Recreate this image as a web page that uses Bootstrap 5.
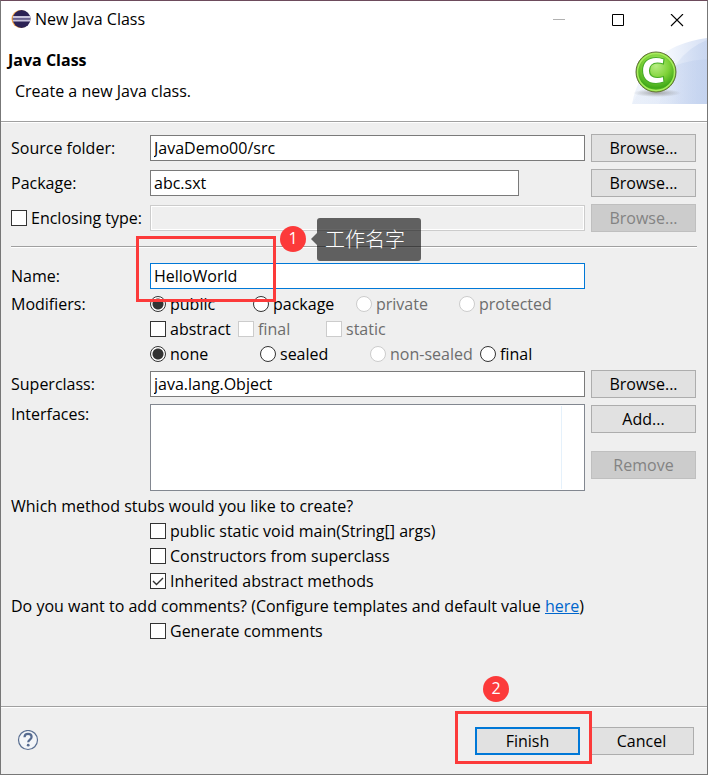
<!DOCTYPE html>
<html lang="en">
<head>
<meta charset="utf-8">
<meta name="viewport" content="width=device-width, initial-scale=1">
<title>New Java Class</title>
<link href="https://cdn.jsdelivr.net/npm/bootstrap@5.3.0/dist/css/bootstrap.min.css" rel="stylesheet">
<style>
  body { font: 16px/20px "Open Sans", "Noto Sans CJK SC", sans-serif; color: #000; background: #efefef; }
  .dialog { border: 1px solid #777; border-top-color: #6d4b5c; }
  .heading { background: #fff; }
  .titlebar { height: 36px; padding: 0 1px 0 10px; }
  .caption-btn { width: 59px; height: 36px; }
  .banner { height: 84px; }
  .banner-text { padding: 13px 0 0 7px; }
  .banner-text h1 { font-size: 16px; line-height: 20px; }
  .banner-text p { padding-left: 7px; margin-top: 11px; }
  .rule { height: 2px; background: #fff; border-top: 1px solid #a0a0a0; }
  .form-area { padding: 11px 11px 0 10px; }
  .form-line { display: grid; grid-template-columns: 139px 1fr 105px; align-items: center; margin-bottom: 7px; }
  .field { height: 26px; margin-right: 6px; padding: 0 3px; border: 1px solid #7a7a7a; border-radius: 0; background: #fff; color: #000; min-width: 0; outline: 0; }
  .field:disabled { border-color: #ccc; background: #efefef; box-shadow: inset -1px -1px #fff, inset 1px 1px #fff; }
  .field-short { margin-right: 72px; }
  .field-active { border-color: #0078d7; }
  .push { --bs-btn-font-size: 16px; --bs-btn-line-height: 20px; --bs-btn-padding-y: 3px; --bs-btn-padding-x: 4px;
    --bs-btn-border-radius: 0; --bs-btn-color: #000; --bs-btn-bg: #e1e1e1; --bs-btn-border-color: #adadad;
    --bs-btn-hover-bg: #e5f1fb; --bs-btn-hover-color: #000; --bs-btn-hover-border-color: #0078d7;
    --bs-btn-disabled-bg: #ccc; --bs-btn-disabled-color: #838383; --bs-btn-disabled-border-color: #bfbfbf; --bs-btn-disabled-opacity: 1;
    width: 105px; height: 28px; }
  .push-default { --bs-btn-border-color: #0078d7; --bs-btn-border-width: 2px; --bs-btn-padding-y: 2px; }
  .option { display: flex; align-items: center; gap: 4px; height: 25px; padding-bottom: 1px; white-space: nowrap; }
  .option input { appearance: none; flex: none; width: 16px; height: 16px; margin: 0; border: 1px solid #333; background: #fff; }
  .option input[type=radio] { border-radius: 50%; }
  .option input[type=radio]:checked { background: radial-gradient(circle, #333 5px, #fff 6px); }
  .option input[type=checkbox]:checked { background: #fff url("data:image/svg+xml,%3Csvg xmlns='http://www.w3.org/2000/svg' viewBox='0 0 14 14'%3E%3Cpath d='M2 7l3.5 3.5L12 4' fill='none' stroke='%23333' stroke-width='1.4'/%3E%3C/svg%3E"); }
  .option input:disabled { border-color: #ccc; }
  .option:has(input:disabled) { color: #6d6d6d; }
  .section-rule { margin: 14px -1px 15px 0; }
  .name-line { margin-bottom: 3px; }
  .modifier-line { display: grid; grid-template-columns: 139px 1fr; }
  .opts-access { display: grid; grid-template-columns: repeat(4, 103px); }
  .opts-flags { display: grid; grid-template-columns: repeat(3, 88px); }
  .opts-sealing { display: grid; grid-template-columns: repeat(4, 110px); }
  .super-line { margin: 3px 0 6px; }
  .interfaces-line { align-items: start; margin-bottom: 3px; }
  .type-list { height: 87px; margin-right: 6px; padding: 1px 22px 1px 0; border: 1px solid #828790; background: #fff; }
  .type-column { border-right: 1px solid #e5f1fb; }
  .list-buttons { padding-top: 1px; gap: 18px; }
  .stubs { padding-left: 139px; }
  .sentence { line-height: 24px; padding-bottom: 1px; }
  .sentence a { color: #0066cc; }
  .footer-bar { padding: 19px 13px 19px 16px; }
  .help-btn { width: 22px; height: 22px; }
  .cancel-btn { margin-left: 9px; }
  /* Annotations that lie over the dialog */
  .outline-box { position: absolute; border: 3px solid #fc3a3a; pointer-events: none; }
  .step { position: absolute; width: 26px; height: 26px; border-radius: 50%; background: #fc3a3a; color: #fff; text-align: center; line-height: 24px; }
  .outline-name { left: -14px; top: -27px; width: 140px; height: 66px; }
  .step-name { left: 130px; top: -37px; }
  .note { position: absolute; left: 167px; top: -45px; height: 43px; padding: 0 16px 0 8px; border-radius: 3px; background: rgba(0,0,0,.6); color: #fff; font-size: 20px; font-weight: 300; line-height: 44px; white-space: nowrap; }
  .note::before { content: ""; position: absolute; right: 100%; top: 15px; border: 6px solid transparent; border-left: 0; border-right-color: rgba(0,0,0,.6); }
  .outline-finish { left: -20px; top: -16px; width: 137px; height: 53px; }
  .step-finish { left: 8px; top: -51px; }
</style>
</head>
<body>
<main class="dialog min-vh-100 d-flex flex-column">
  <header class="heading">
    <div class="titlebar d-flex align-items-center">
      <svg width="20" height="20" viewBox="0 0 20 20" aria-hidden="true">
        <circle cx="9.5" cy="10" r="9" fill="#f5a54a"/><circle cx="10.6" cy="10" r="8.9" fill="#2c2255"/>
        <path d="M2 8h17.200M2 11.500h17.200" stroke="#c9c4dc" stroke-width="1.800"/><path d="M2 9.700h17.400" stroke="#746b9b" stroke-width="1.200"/>
      </svg>
      <span class="ms-1">New Java Class</span>
      <div class="ms-auto d-flex">
        <button class="caption-btn btn p-0 border-0" type="button" aria-label="Minimize" disabled><svg width="14" height="14" viewBox="0 0 14 14"><path d="M1 5.500h12" stroke="#888"/></svg></button>
        <button class="caption-btn btn p-0 border-0" type="button" aria-label="Maximize"><svg width="14" height="14" viewBox="0 0 14 14"><path d="M1.500 .5h11v11h-11z" fill="none" stroke="#000"/></svg></button>
        <button class="caption-btn btn p-0 border-0" type="button" aria-label="Close"><svg width="14" height="14" viewBox="0 0 14 14"><path d="M1 0l12 12M13 0L1 12" stroke="#000" stroke-width="1.100"/></svg></button>
      </div>
    </div>
    <div class="banner d-flex justify-content-between">
      <div class="banner-text">
        <h1 class="fw-bold mb-0">Java Class</h1>
        <p class="mb-0">Create a new Java class.</p>
      </div>
      <svg width="76" height="68" viewBox="0 0 76 68" aria-hidden="true">
        <defs>
          <linearGradient id="sky"><stop offset="0" stop-color="#eef3fb"/><stop offset=".5" stop-color="#f2f6fd"/><stop offset="1" stop-color="#d6e0f4"/></linearGradient>
          <linearGradient id="wave"><stop offset="0" stop-color="#c9d7f0" stop-opacity=".1"/><stop offset="1" stop-color="#c0d0ee" stop-opacity=".6"/></linearGradient>
          <radialGradient id="orb" cx=".5" cy=".35" r=".65"><stop offset="0" stop-color="#b8ed83"/><stop offset=".5" stop-color="#7ed238"/><stop offset=".85" stop-color="#3fa818"/><stop offset="1" stop-color="#83d932"/></radialGradient>
          <radialGradient id="shade"><stop offset="0" stop-color="#888" stop-opacity=".7"/><stop offset="1" stop-color="#888" stop-opacity="0"/></radialGradient>
        </defs>
        <path d="M1 67Q12 10 76 1V67Z" fill="url(#sky)"/>
        <path d="M28 67Q40 17 76 3V67Z" fill="url(#wave)"/>
        <path d="M1 67Q20 26 76 22V67Z" fill="url(#wave)"/>
        <ellipse cx="26" cy="56" rx="24" ry="4" fill="url(#shade)"/>
        <circle cx="25" cy="35" r="20" fill="url(#orb)" stroke="#666f3a"/>
        <circle cx="25" cy="35" r="18.500" fill="none" stroke="#a9ec60" stroke-width="1.500"/>
        <path d="M33 22q-4-1.500-8-1.500C16 20.500 11.500 26 11.500 33.500S16 46.500 25 46.500q4 0 8-1.500l-.6-5.500q-3 1-6 1c-5 0-7.900-2.500-7.900-7s3-7.500 7.900-7.500q3 0 6 1z" fill="#fff" stroke="#48ad27" stroke-width="1.200"/>
      </svg>
    </div>
    <div class="rule"></div>
  </header>

  <form class="form-area" id="class-form" onsubmit="return false">
    <div class="form-line">
      <label for="folder">Source folder:</label>
      <input class="field" id="folder" type="text" value="JavaDemo00/src">
      <button class="btn push" type="button">Browse...</button>
    </div>
    <div class="form-line">
      <label for="package">Package:</label>
      <input class="field field-short" id="package" type="text" value="abc.sxt">
      <button class="btn push" type="button">Browse...</button>
    </div>
    <div class="form-line mb-0">
      <label class="option"><input type="checkbox">Enclosing type:</label>
      <input class="field" type="text" aria-label="Enclosing type" disabled>
      <button class="btn push" type="button" disabled>Browse...</button>
    </div>
    <div class="rule section-rule"></div>

    <div class="form-line name-line">
      <label for="class-name">Name:</label>
      <div class="position-relative d-flex">
        <input class="field field-active flex-grow-1" id="class-name" type="text" value="HelloWorld">
        <div class="outline-box outline-name z-1"></div>
        <span class="step step-name">1</span>
        <span class="note" lang="zh">工作名字</span>
      </div>
    </div>
    <div class="modifier-line">
      <span class="sentence">Modifiers:</span>
      <div>
        <div class="opts-access" role="radiogroup" aria-label="Access">
          <label class="option"><input type="radio" name="access" checked>public</label>
          <label class="option"><input type="radio" name="access">package</label>
          <label class="option"><input type="radio" name="access" disabled>private</label>
          <label class="option"><input type="radio" name="access" disabled>protected</label>
        </div>
        <div class="opts-flags">
          <label class="option"><input type="checkbox">abstract</label>
          <label class="option"><input type="checkbox" disabled>final</label>
          <label class="option"><input type="checkbox" disabled>static</label>
        </div>
        <div class="opts-sealing" role="radiogroup" aria-label="Sealing">
          <label class="option"><input type="radio" name="sealing" checked>none</label>
          <label class="option"><input type="radio" name="sealing">sealed</label>
          <label class="option"><input type="radio" name="sealing" disabled>non-sealed</label>
          <label class="option"><input type="radio" name="sealing">final</label>
        </div>
      </div>
    </div>
    <div class="form-line super-line">
      <label for="superclass">Superclass:</label>
      <input class="field" id="superclass" type="text" value="java.lang.Object">
      <button class="btn push" type="button">Browse...</button>
    </div>
    <div class="form-line interfaces-line">
      <span id="interfaces-label">Interfaces:</span>
      <div class="type-list d-flex" role="listbox" aria-labelledby="interfaces-label" tabindex="0"><div class="type-column flex-grow-1"></div></div>
      <div class="list-buttons d-flex flex-column">
        <button class="btn push" type="button">Add...</button>
        <button class="btn push" type="button" disabled>Remove</button>
      </div>
    </div>

    <div class="sentence">Which method stubs would you like to create?</div>
    <div class="stubs">
      <label class="option"><input type="checkbox">public static void main(String[] args)</label>
      <label class="option"><input type="checkbox">Constructors from superclass</label>
      <label class="option"><input type="checkbox" checked>Inherited abstract methods</label>
    </div>
    <div class="sentence">Do you want to add comments? (Configure templates and default value <a href="#">here</a>)</div>
    <div class="stubs">
      <label class="option"><input type="checkbox">Generate comments</label>
    </div>
  </form>

  <footer class="mt-auto">
    <div class="rule"></div>
    <div class="footer-bar d-flex align-items-center">
      <button class="help-btn btn p-0 border-0 d-flex" type="button" aria-label="Help">
        <svg width="22" height="22" viewBox="0 0 22 22"><circle cx="11" cy="10" r="9.500" fill="#f3f5f8" stroke="#5a6f92" stroke-width="1.200"/><path d="M7.500 7.300C7.600 4.900 9 3.900 11 3.900c2.200 0 3.600 1.200 3.600 3 0 2.600-3.400 2.700-3.400 5.400" fill="none" stroke="#566b90" stroke-width="2.200"/><circle cx="11.200" cy="15.200" r="1.400" fill="#566b90"/></svg>
      </button>
      <div class="ms-auto position-relative d-flex">
        <button class="btn push push-default" type="submit" form="class-form">Finish</button>
        <button class="btn push cancel-btn" type="button">Cancel</button>
        <div class="outline-box outline-finish"></div>
        <span class="step step-finish">2</span>
      </div>
    </div>
  </footer>
</main>
<script src="https://cdn.jsdelivr.net/npm/bootstrap@5.3.0/dist/js/bootstrap.bundle.min.js"></script>
</body>
</html>
